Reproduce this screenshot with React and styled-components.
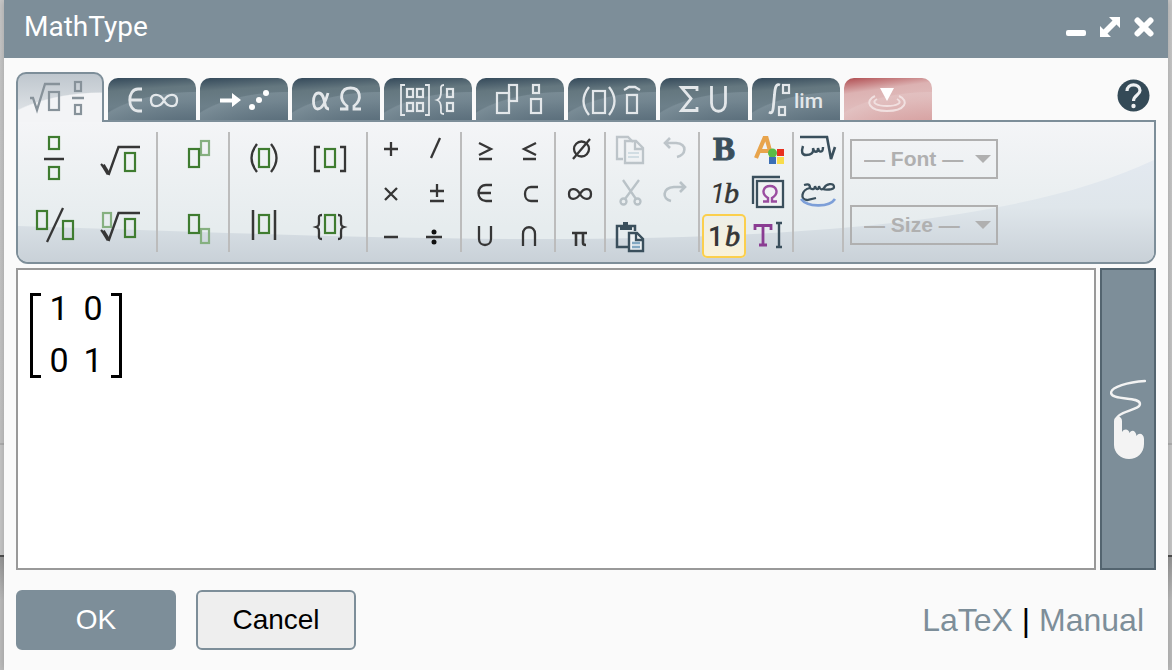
import React from "react";
import styled, { createGlobalStyle, css } from "styled-components";

const GlobalStyle = createGlobalStyle`
  *, *::before, *::after { box-sizing: border-box; }
  body { margin: 0; font-family: "Liberation Sans", Arial, sans-serif; background: #c6c6c6; }
  button { font: inherit; }
`;

const slate = "#7d8e99";
const ink = "#363636";
const green = "#3f7c30";
const pale = "#86b080";
const navy = "#3a4f5c";

/* ---------- layout ---------- */

const Backdrop = styled.div`
  min-height: 100vh;
  padding: 0 4px;
  display: flex;
  background: linear-gradient(
    #c8c8c8 0, #c4c4c4 443px, #b0b0b0 443px, #b0b0b0 445px,
    #c8c8c8 445px, #c8c8c8 555px, #505050 555px, #505050 557px, #989898 557px, #bdbdbd 600px
  );
`;

const Dialog = styled.main`
  flex: 1;
  min-width: 0;
  display: flex;
  flex-direction: column;
  background: #fafafa;
  box-shadow: 0 0 8px rgba(0, 0, 0, 0.2);
`;

const TitleBar = styled.header`
  height: 58px;
  padding: 0 14px 4px 20px;
  display: flex;
  align-items: center;
  justify-content: space-between;
  background: ${slate};
  color: #fff;
`;

const Title = styled.h1`
  margin: 0;
  font: 400 28px/32px Roboto, sans-serif;
`;

const WindowControls = styled.div`
  display: flex;
  gap: 14px;
`;

const PlainButton = styled.button`
  display: block;
  padding: 0;
  border: 0;
  background: none;
  cursor: pointer;
  svg { display: block; }
`;

const Body = styled.div`
  flex: 1;
  display: flex;
  flex-direction: column;
  padding: 14px 12px 20px;
`;

const TabRow = styled.div`
  height: 48px;
  display: flex;
  align-items: flex-end;
  justify-content: space-between;
`;

const Tabs = styled.div`
  display: flex;
  align-items: flex-end;
  gap: 4px;
`;

const tabColors = {
  dark: css`
    background:
      radial-gradient(110px 50px at 100% 150%, rgba(72, 93, 108, 0.9) 0, rgba(132, 150, 160, 0.6) 97%, transparent 99%),
      linear-gradient(176deg, #34495a 0, #64777f 28%, #6d808a 60%, #5b6e79 100%);
  `,
  red: css`
    background:
      radial-gradient(110px 50px at 100% 150%, rgba(208, 142, 142, 0.8) 0, rgba(227, 195, 195, 0.7) 97%, transparent 99%),
      linear-gradient(172deg, #b04c50 0, #dcb2b2 30%, #e0bcbc 60%, #d9a5a5 100%);
  `,
  active: css`
    position: relative;
    z-index: 1;
    height: 50px;
    margin-bottom: -2px;
    border: 2px solid ${slate};
    border-bottom: 0;
    background:
      radial-gradient(120px 60px at 84px 78px, #f3f4f6 98%, transparent 100%),
      linear-gradient(#bfc7ce, #e6e9ec);
  `,
};

const Tab = styled.button`
  display: block;
  width: 88px;
  height: 42px;
  padding: 0;
  border: 0;
  border-radius: 10px 10px 0 0;
  overflow: hidden;
  cursor: pointer;
  ${({ $kind }) => tabColors[$kind]}
  svg { display: block; }
`;

const HelpButton = styled(PlainButton)`
  margin: 0 6px 8px 0;
`;

const Ribbon = styled.section`
  position: relative;
  display: flex;
  padding: 4px 2px;
  border: 2px solid ${slate};
  border-radius: 0 0 12px 12px;
  background: linear-gradient(#f4f5f7, #e6ecee 75%);
  overflow: hidden;
`;

const Wave = styled.svg`
  position: absolute;
  inset: 0;
  width: 100%;
  height: 100%;
`;

const Group = styled.div`
  position: relative;
  flex: none;
  display: grid;
  grid-auto-flow: column;
  grid-template-rows: repeat(${({ $rows }) => $rows}, ${({ $rows }) => 132 / $rows}px);
  grid-auto-columns: ${({ $rows }) => 132 / $rows}px;
  padding: 0 2px;
`;

const Divider = styled.span`
  position: relative;
  flex: none;
  width: 2px;
  margin: 6px 0;
  background: #bcbcbc;
`;

const Tool = styled(PlainButton)`
  ${({ $on }) => $on && css`
    border-radius: 5px;
    background: linear-gradient(#eceee9, #faf2d8);
    box-shadow: inset 0 0 0 2px #fbcf4d;
  `}
  &:disabled { opacity: 0.28; cursor: default; }
`;

const Pickers = styled.div`
  position: relative;
  display: flex;
  flex-direction: column;
  gap: 26px;
  padding: 13px 6px 0;
`;

const Picker = styled.label`
  position: relative;
  width: 148px;
  &::after {
    content: "";
    position: absolute;
    top: 16px;
    right: 7px;
    border: 8px solid transparent;
    border-top-color: #b0b0b0;
    border-bottom: 0;
    pointer-events: none;
  }
`;

const PickerSelect = styled.select`
  display: block;
  width: 100%;
  height: 40px;
  padding: 0 0 2px 12px;
  appearance: none;
  border: 2px solid #b0b0b0;
  border-radius: 0;
  background: none;
  color: #b0b0b0;
  opacity: 1;
  font: 700 21px "Liberation Sans", Arial, sans-serif;
`;

const Workspace = styled.div`
  flex: 1;
  min-height: 180px;
  display: flex;
  gap: 4px;
  margin: 4px 0 20px;
`;

const Editor = styled.div`
  flex: 1;
  padding: 23px 12px;
  border: 2px solid #999;
  background: #fff;
  outline: none;
`;

const Matrix = styled.div`
  width: 92px;
  height: 85px;
  display: flex;
  justify-content: space-between;
  color: #000;
`;

const Bracket = styled.span`
  width: 11px;
  border: 3px solid #000;
  ${({ $side }) => ($side === "left" ? "border-right: 0;" : "border-left: 0;")}
`;

const MatrixCells = styled.div`
  display: grid;
  grid-template: repeat(2, 52px) / repeat(2, 34px);
  height: 85px;
  margin-top: -11px;
  text-align: center;
  font: 400 34px/52px Roboto, sans-serif;
`;

const HandButton = styled.button`
  width: 56px;
  display: flex;
  align-items: center;
  justify-content: center;
  padding: 0;
  border: 2px solid #53646f;
  background: ${slate};
  cursor: pointer;
`;

const Footer = styled.footer`
  display: flex;
  align-items: center;
  gap: 20px;
`;

const ActionButton = styled.button`
  width: 160px;
  height: 60px;
  padding: 0;
  border: 2px solid ${slate};
  border-radius: 6px;
  background: ${({ $primary }) => ($primary ? slate : "#eee")};
  color: ${({ $primary }) => ($primary ? "#fff" : "#000")};
  font-size: 28px;
  cursor: pointer;
`;

const Links = styled.nav`
  margin-left: auto;
  padding-right: 12px;
  font-size: 32px;
  line-height: 40px;
  color: #000;
  a { color: ${slate}; text-decoration: none; }
`;

/* ---------- icon helpers ---------- */

const Box = ({ x, y, w = 10, h = 18, c = green }) => (
  <rect x={x} y={y} width={w} height={h} stroke={c} strokeWidth="2.200" fill="none" />
);

const Icon = ({ size, children }) => (
  <svg width={size} height={size} viewBox={`0 0 ${size} ${size}`} fill="none" stroke={ink} strokeWidth="2.300" aria-hidden="true">
    {children}
  </svg>
);

const rootSign = (
  <g>
    <path d="M13 38L16 41" strokeWidth="2.200" />
    <path d="M15 39L20.500 48" strokeWidth="3.800" />
    <path d="M20.500 49L30.500 21H52" strokeWidth="2.400" />
  </g>
);

const large = {
  "Fraction": <><Box x={27} y={11} h={12} /><path d="M22 33H42" /><Box x={27} y={41} h={12} /></>,
  "Bevelled fraction": <><Box x={15} y={19} /><path d="M41 16L25 50" /><Box x={41} y={29} /></>,
  "Square root": <>{rootSign}<Box x={37} y={27} /></>,
  "Root": <>{rootSign}<Box x={37} y={27} /><Box x={15} y={21} w={8} h={14} c={pale} /></>,
  "Superscript": <><Box x={41} y={15} w={8} h={14} c={pale} /><Box x={29} y={23} /></>,
  "Subscript": <><Box x={41} y={37} w={8} h={14} c={pale} /><Box x={29} y={23} /></>,
  "Parentheses": <><path d="M25 18Q14 32 25 46M39 18Q50 32 39 46" /><Box x={27} y={23} /></>,
  "Vertical bars": <><path d="M21 18V48M43 18V48" strokeWidth="2.500" /><Box x={27} y={23} /></>,
  "Square brackets": <><path d="M22 21H17V45H22M42 21H47V45H42" /><Box x={27} y={23} /></>,
  "Curly brackets": <><path d="M24 23C20 23 21 25 21 29C21 33 21 34 18 35C21 36 21 37 21 41C21 45 20 47 24 47M40 23C44 23 43 25 43 29C43 33 43 34 46 35C43 36 43 37 43 41C43 45 44 47 40 47" /><Box x={27} y={23} /></>,
};

const small = {
  "Plus": <path d="M14 23H28M21 16V30" />,
  "Times": <path d="M15 18L27 30M27 18L15 30" />,
  "Minus": <path d="M14 23H28" />,
  "Slash": <path d="M26 12L17 32" />,
  "Plus minus": <path d="M16 21H30M23 14V27M16 31H30" />,
  "Division": <><path d="M12 23H28" /><g fill="#111" stroke="none"><circle cx="20" cy="18" r="2.500" /><circle cx="20" cy="28" r="2.500" /></g></>,
  "Greater or equal": <path d="M15 17L27 23L15 29M15 33H28" />,
  "Element of": <path d="M28 15H22C12 15 12 31 22 31H28M15 23H27" />,
  "Union": <path d="M15 12V25C15 33 27 33 27 25V12" />,
  "Less or equal": <path d="M28 17L16 23L28 29M15 33H28" />,
  "Subset": <path d="M30 17H23C15 17 15 31 23 31H30" />,
  "Intersection": <path d="M15 32V20C15 11 27 11 27 20V32" />,
  "Empty set": <><circle cx="23.500" cy="23" r="7.500" /><path d="M32 13L15 33" /></>,
  "Infinity": <path d="M22 24C18 17 11 18 11 24C11 30 18 31 22 24C26 17 33 18 33 24C33 30 26 31 22 24Z" />,
  "Pi": <path d="M14 19H29M18 19V32M25 19V29Q25 31 28 31" strokeWidth="2.600" />,
  "Copy": <><path d="M15 33H9V11H20L25 16" stroke={navy} /><path d="M17 15H28L35 22V37H17ZM27 15V23H35" stroke={navy} /><path d="M20 27H31M20 31H31" stroke="#85a8bb" strokeWidth="2" /></>,
  "Cut": <><path d="M15 10L28 29M31 10L17 29" stroke={navy} /><circle cx="15.500" cy="31.500" r="3" stroke={navy} /><circle cx="29.500" cy="31.500" r="3" stroke={navy} /></>,
  "Paste": <><path d="M20 33H9V12H27V17" stroke={navy} strokeWidth="2.500" /><path d="M12 11H15V8H20V11H24V16H12Z" fill={navy} stroke="none" /><path d="M21 19H29L35 25V37H21Z" fill="#eef2f4" stroke={navy} strokeWidth="2.400" /><path d="M28 19V26H35" stroke={navy} /><path d="M24 29H32M24 33H32" stroke="#82a8c2" /></>,
  "Undo": <path d="M18 12L13 17L18 22M13 17H24C36 18 34 29 25 31" stroke={navy} strokeWidth="2.600" />,
  "Redo": <path d="M28 12L33 17L28 22M33 17H22C10 18 10 29 19 31" stroke={navy} strokeWidth="2.600" />,
  "Bold": <text x="11" y="34" fontFamily="Liberation Serif, serif" fontWeight="700" fontSize="33" fill={navy} stroke={navy} strokeWidth="1">B</text>,
  "Italic": <g fill={ink} stroke="none"><text x="8" y="33" fontFamily="Roboto, sans-serif" fontStyle="italic" fontSize="28">1</text><text x="22" y="33" fontFamily="Liberation Serif, serif" fontStyle="italic" fontSize="30" stroke={ink} strokeWidth="0.600">b</text></g>,
  "Automatic italic": <g fill={ink} stroke="none"><text x="6" y="32" fontFamily="Roboto, sans-serif" fontWeight="500" fontSize="27">1</text><text x="23" y="32" fontFamily="Liberation Serif, serif" fontStyle="italic" fontSize="30" stroke={ink} strokeWidth="0.800">b</text></g>,
  "Color": <><path d="M10 32L18.500 12H20.500L26 32M13 25H24" stroke="#e8a44c" strokeWidth="4.200" /><g stroke="none"><circle cx="26.500" cy="27" r="4.500" fill="#5bbb46" /><path d="M31 23H38V30H31Z" fill="#e8301f" /><path d="M23 31H30V38H23Z" fill="#3b6fb4" /><path d="M31 31H38V38H31Z" fill="#f8dc4c" /></g></>,
  "Special characters": <><path d="M7 34V7H34" stroke={navy} /><rect x="11" y="11" width="26" height="26" fill="#f0f2f4" stroke={navy} /><path d="M17 31.500H22V28C14 23 18 16 24 16C30 16 34 23 26 28V31.500H31" stroke="#9a4da0" strokeWidth="2.400" /></>,
  "Text mode": <><path d="M9 16V11.500H25V16M17 12V31M13 31H21" stroke="#8a3c92" strokeWidth="2.800" /><path d="M30 9H36M33 9V33M30 33H36" stroke={navy} strokeWidth="2.400" /></>,
  "Right to left": <><path d="M4 11H31L35 33L39 21" stroke={navy} strokeWidth="2.600" /><path d="M7 20C5 26 6 29 10 29C15 29 18 27 17 22C18 27 22 27 22 22C23 27 27 27 27 21" stroke={navy} strokeWidth="2.400" /></>,
  "Arabic equation": <><path d="M8 15C12 14 14 14 14 18C17 20 19 19 19 16C20 20 23 20 23 16C24 20 26 20 28 18C30 14 38 12 38 17C38 20 29 20 27 19" stroke={navy} /><path d="M14 18C5 20 4 30 11 30L20 28" stroke={navy} /><path d="M5 29C11 37 33 38 39 29" stroke="#7d9fd8" strokeWidth="2.600" /></>,
};

const ribbon = [
  { rows: 2, tools: ["Fraction", "Bevelled fraction", "Square root", "Root"] },
  { rows: 2, tools: ["Superscript", "Subscript"] },
  { rows: 2, tools: ["Parentheses", "Vertical bars", "Square brackets", "Curly brackets"] },
  { rows: 3, tools: ["Plus", "Times", "Minus", "Slash", "Plus minus", "Division"] },
  { rows: 3, tools: ["Greater or equal", "Element of", "Union", "Less or equal", "Subset", "Intersection"] },
  { rows: 3, tools: ["Empty set", "Infinity", "Pi"] },
  { rows: 3, tools: ["Copy", "Cut", "Paste", "Undo", "Redo"] },
  { rows: 3, tools: ["Bold", "Italic", "Automatic italic", "Color", "Special characters", "Text mode"] },
  { rows: 3, tools: ["Right to left", "Arabic equation"] },
];

const disabledTools = ["Copy", "Cut", "Undo", "Redo"];

const light = "#e3e7ea";

const tabs = [
  { name: "Symbols", art: <><path d="M34 11H30C19 11 19 33 30 33H34M22 22H34" strokeWidth="2.800" /><path d="M56 22.500C52 15 43 15 43 22.500C43 30 52 30 56 22.500C60 15 69 15 69 22.500C69 30 60 30 56 22.500Z" strokeWidth="2.300" /></> },
  { name: "Arrows", art: <g fill="#fff" stroke="none"><path d="M20 20.500H32V15L41 22L32 29V24.500H20Z" /><circle cx="52" cy="29" r="3" /><circle cx="59" cy="22" r="3" /><circle cx="66" cy="15" r="3" /></g> },
  { name: "Greek and letters", art: <><path d="M36 15C33 26 29 31 25.500 31C20 31 20 15 26.500 15C31 15 32 21 33 26C33.500 29 35 31 37 31" strokeWidth="2.800" /><path d="M48 31H55V28C46 21 49 10 58.500 10C68 10 71 21 62 28V31H69" strokeWidth="2.800" /></> },
  { name: "Matrices", art: <><path d="M21 7H17V37H21M41 7H45V37H41M60 7C56 7 57 10 57 14C57 19 56 21 53 22C56 23 57 25 57 30C57 34 56 36 60 36" strokeWidth="1.800" /><Box x={23} y={11} w={6} h={8} c={light} /><Box x={33} y={11} w={6} h={8} c={light} /><Box x={23} y={25} w={6} h={8} c={light} /><Box x={33} y={25} w={6} h={8} c={light} /><Box x={63} y={11} w={6} h={8} c={light} /><Box x={63} y={25} w={6} h={8} c={light} /></> },
  { name: "Scripts and layout", art: <><Box x={21} y={15} w={12} h={20} c={light} /><Box x={33} y={7} w={8} h={16} c={light} /><Box x={57} y={7} w={6} h={8} c={light} /><Box x={55} y={21} w={10} h={14} c={light} /></> },
  { name: "Brackets and accents", art: <><path d="M21 9Q10 23 21 37M41 9Q52 23 41 37M56 12L61 9H67L72 12" strokeWidth="2.300" /><Box x={25} y={13} w={12} h={22} c={light} /><Box x={59} y={17} w={10} h={18} c={light} /></> },
  { name: "Big operators", art: <><path d="M37 13V9.500H21.500L31 20.500L21.500 32.500H37V29" strokeWidth="2.800" /><path d="M51.500 8V25C51.500 36 65.500 36 65.500 25V8" strokeWidth="2.800" /></> },
  { name: "Calculus", art: <><path d="M28 7C24 5 23 10 22.500 17L21.500 27C21 34 20 36 17 34" strokeWidth="2.800" /><Box x={31} y={7} w={6} h={8} c={light} /><Box x={27} y={29} w={6} h={8} c={light} /><text x="42" y="30" fontFamily="Roboto, sans-serif" fontWeight="500" fontSize="21" fill={light} stroke="none">lim</text></> },
];

const tabSvg = { width: 88, height: 42, viewBox: "0 0 88 42", fill: "none", stroke: light, strokeWidth: 2, "aria-hidden": true };

/* ---------- app ---------- */

export default function App() {
  return (
    <Backdrop>
      <GlobalStyle />
      <Dialog>
        <TitleBar>
          <Title>MathType</Title>
          <WindowControls>
            <PlainButton aria-label="Minimize">
              <svg width="20" height="20" viewBox="0 0 20 20"><rect y="13" width="20" height="6" rx="2" fill="#fff" /></svg>
            </PlainButton>
            <PlainButton aria-label="Full screen">
              <svg width="20" height="20" viewBox="0 0 20 20"><path d="M9 0H20V11L16.500 7.500L7.500 16.500L11 20H0V9L3.500 12.500L12.500 3.500Z" fill="#fff" /></svg>
            </PlainButton>
            <PlainButton aria-label="Close">
              <svg width="20" height="20" viewBox="0 0 20 20"><path d="M3.500 3.500L16.500 16.500M16.500 3.500L3.500 16.500" stroke="#fff" strokeWidth="6" strokeLinecap="round" /></svg>
            </PlainButton>
          </WindowControls>
        </TitleBar>

        <Body>
          <TabRow>
            <Tabs role="tablist">
              <Tab role="tab" aria-selected="true" aria-label="General" $kind="active">
                <svg width="84" height="48" viewBox="2 2 84 48" fill="none" stroke="#87929a" strokeWidth="2.300" aria-hidden="true">
                  <path d="M14 26H17L21 38L29 12H44" />
                  <Box x={33} y={20} c="#87929a" />
                  <Box x={59} y={10} w={6} h={9} c="#87929a" />
                  <path d="M56 26H68" />
                  <Box x={59} y={33} w={6} h={9} c="#87929a" />
                </svg>
              </Tab>
              {tabs.map((t) => (
                <Tab key={t.name} role="tab" aria-selected="false" aria-label={t.name} $kind="dark">
                  <svg {...tabSvg}>{t.art}</svg>
                </Tab>
              ))}
              <Tab role="tab" aria-selected="false" aria-label="Contextual" $kind="red">
                <svg {...tabSvg} stroke="#f1e0e0">
                  <path d="M31 18C20 23 25 33 43 33C61 33 66 23 55 18" />
                  <path d="M33 21C26 25 34 28 43 28C52 28 60 25 53 21" />
                  <path d="M36 10H50L43 23Z" fill="#fff" stroke="none" />
                </svg>
              </Tab>
            </Tabs>
            <HelpButton aria-label="Help">
              <svg width="33" height="33" viewBox="0 0 33 33" fill="none">
                <circle cx="16.500" cy="16.500" r="16" fill="#344a57" />
                <path d="M10 12C10 4 23 4 23 11.500C23 16 16.500 16 16.500 22" stroke="#eef1f3" strokeWidth="3.200" />
                <circle cx="16.500" cy="27" r="2.200" fill="#eef1f3" />
              </svg>
            </HelpButton>
          </TabRow>

          <Ribbon aria-label="Tools">
            <Wave viewBox="0 0 1136 140" preserveAspectRatio="none" aria-hidden="true">
              <defs>
                <linearGradient id="wave" gradientUnits="userSpaceOnUse" x1="0" y1="40" x2="0" y2="140">
                  <stop offset="0" stopColor="#e3e9f0" />
                  <stop offset="0.450" stopColor="#dfe6eb" />
                  <stop offset="1" stopColor="#c9d1d8" />
                </linearGradient>
              </defs>
              <path d="M0 104C190 110 350 117 520 117C790 117 1010 98 1136 38V140H0Z" fill="url(#wave)" />
            </Wave>
            {ribbon.map((g) => (
              <React.Fragment key={g.tools[0]}>
                <Group $rows={g.rows}>
                  {g.tools.map((name) => (
                    <Tool key={name} aria-label={name} disabled={disabledTools.includes(name)} $on={name === "Automatic italic"}>
                      <Icon size={132 / g.rows}>{g.rows === 2 ? large[name] : small[name]}</Icon>
                    </Tool>
                  ))}
                </Group>
                <Divider />
              </React.Fragment>
            ))}
            <Pickers>
              <Picker>
                <PickerSelect disabled aria-label="Font"><option>— Font —</option></PickerSelect>
              </Picker>
              <Picker>
                <PickerSelect disabled aria-label="Size"><option>— Size —</option></PickerSelect>
              </Picker>
            </Pickers>
          </Ribbon>

          <Workspace>
            <Editor role="math" tabIndex={0} aria-label="Formula">
              <Matrix>
                <Bracket $side="left" />
                <MatrixCells>
                  <span>1</span><span>0</span>
                  <span>0</span><span>1</span>
                </MatrixCells>
                <Bracket $side="right" />
              </Matrix>
            </Editor>
            <HandButton aria-label="Handwriting">
              <svg width="36" height="80" viewBox="0 0 36 80" fill="none" aria-hidden="true">
                <path d="M35 2C18 3 1 8 1 14C2 22 30 17 30 25C30 31 9 32 7 39" stroke="#f3f3f3" strokeWidth="2.400" strokeLinecap="round" />
                <path d="M4 42C4 36 12 36 12 42V53C14 49 19 50 19.500 54C22 50 26 52 26.500 57C29 53 34 55 34 60V65C34 74 27 80 19 80C11 80 4 74 4 66Z" fill="#f3f3f3" />
              </svg>
            </HandButton>
          </Workspace>

          <Footer>
            <ActionButton $primary>OK</ActionButton>
            <ActionButton>Cancel</ActionButton>
            <Links>
              <a href="#latex">LaTeX</a> | <a href="#manual">Manual</a>
            </Links>
          </Footer>
        </Body>
      </Dialog>
    </Backdrop>
  );
}
